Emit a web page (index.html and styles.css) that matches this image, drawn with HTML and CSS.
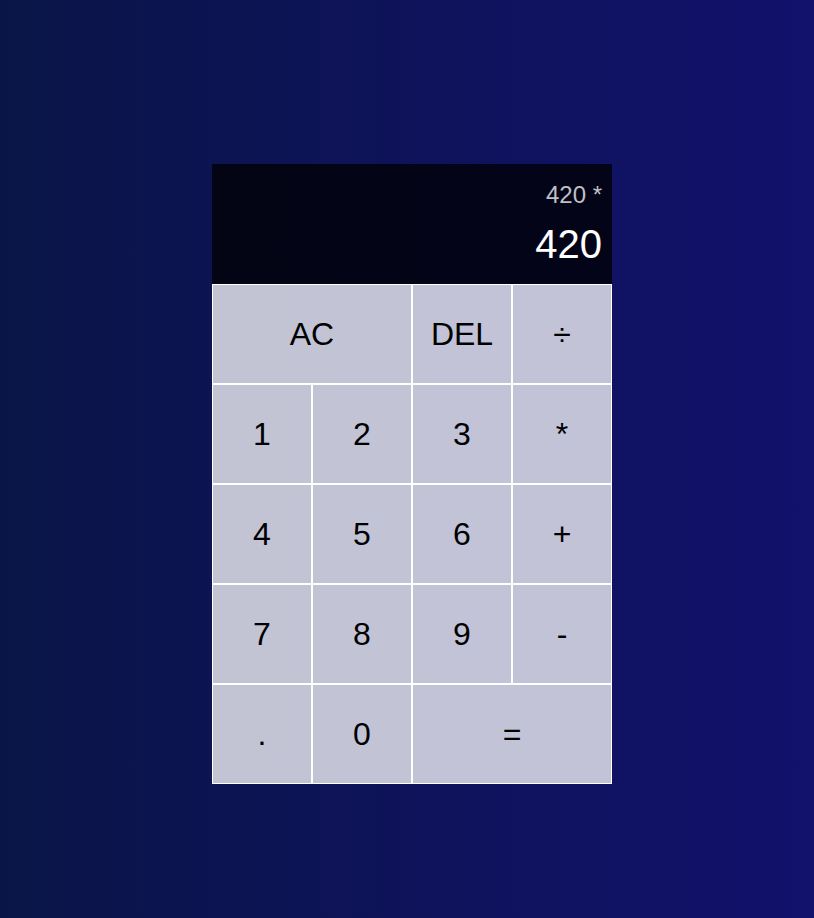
FILE: index.html
```html
<!DOCTYPE html>
<html lang="en">
<head>
<meta charset="utf-8">
<title>Calculator</title>
<link rel="stylesheet" href="styles.css">
</head>
<body>
<div class="calculator-grid">
  <div class="output">
    <div class="previous-operand">420 *</div>
    <div class="current-operand">420</div>
  </div>
  <button class="span-two">AC</button>
  <button>DEL</button>
  <button>÷</button>
  <button>1</button>
  <button>2</button>
  <button>3</button>
  <button>*</button>
  <button>4</button>
  <button>5</button>
  <button>6</button>
  <button>+</button>
  <button>7</button>
  <button>8</button>
  <button>9</button>
  <button>-</button>
  <button>.</button>
  <button>0</button>
  <button class="span-two">=</button>
</div>
</body>
</html>
```
FILE: styles.css
```css
*, *::before, *::after {
  box-sizing: border-box;
  font-family: "Liberation Sans", Arial, sans-serif;
  font-weight: normal;
}

html, body {
  margin: 0;
  padding: 0;
}

body {
  min-height: 100vh;
  background: linear-gradient(to right, #0a1547, #12116c);
}

.calculator-grid {
  display: grid;
  justify-content: center;
  align-content: start;
  padding-top: 164px;
  padding-left: 10px;
  grid-template-columns: repeat(4, 100px);
  grid-template-rows: minmax(120px, auto) repeat(5, 100px);
}

.calculator-grid > button {
  cursor: pointer;
  font-size: 2rem;
  border: 1px solid white;
  outline: none;
  background-color: rgba(255, 255, 255, 0.75);
  color: #000;
  padding: 0;
  margin: 0;
}

.span-two {
  grid-column: span 2;
}

.output {
  grid-column: 1 / -1;
  background-color: rgba(0, 0, 0, 0.75);
  display: flex;
  align-items: flex-end;
  justify-content: space-around;
  flex-direction: column;
  padding: 10px;
  word-wrap: break-word;
  word-break: break-all;
}

.previous-operand {
  color: rgba(255, 255, 255, 0.75);
  font-size: 1.5rem;
}

.current-operand {
  color: white;
  font-size: 2.5rem;
}
```
